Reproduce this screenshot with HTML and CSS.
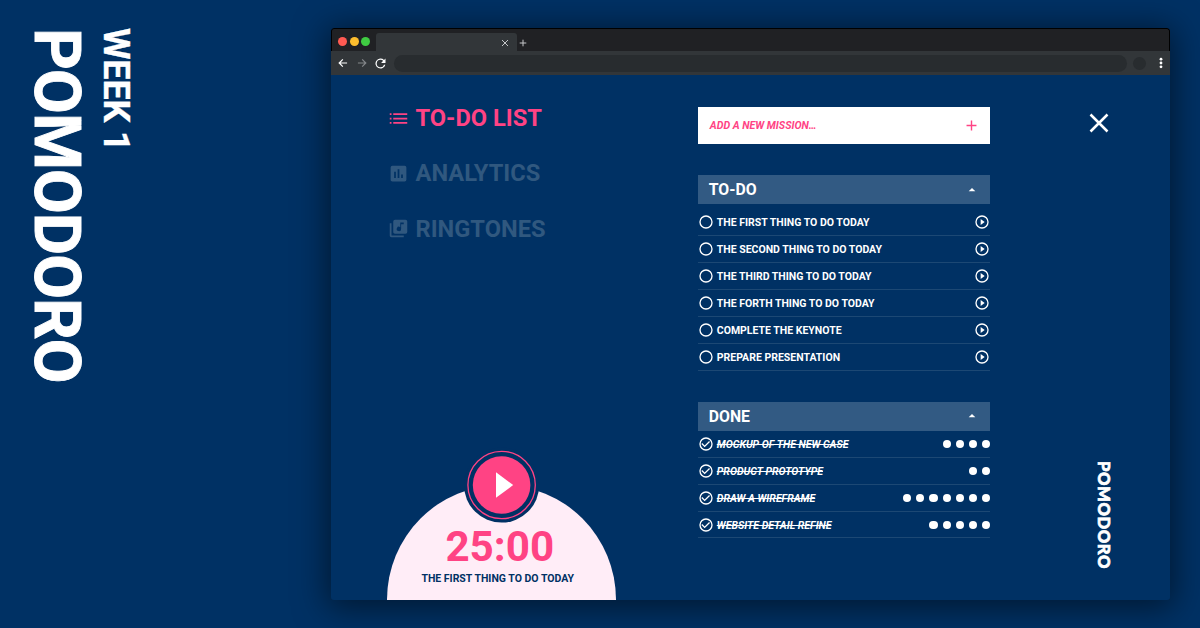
FILE: index.html
```html
<!DOCTYPE html>
<html lang="en">
<head>
<meta charset="utf-8">
<title>Pomodoro</title>
<link rel="stylesheet" href="styles.css">
</head>
<body>
<svg class="defs" width="0" height="0">
  <symbol id="ring" viewBox="0 0 24 24"><path d="M12 2a10 10 0 1 0 0 20 10 10 0 0 0 0-20zm0 18a8 8 0 1 1 0-16 8 8 0 0 1 0 16z"/></symbol>
  <symbol id="play" viewBox="0 0 24 24"><path d="M10 16.5l6-4.5-6-4.5v9zM12 2a10 10 0 1 0 0 20 10 10 0 0 0 0-20zm0 18a8 8 0 1 1 0-16 8 8 0 0 1 0 16z"/></symbol>
  <symbol id="check" viewBox="0 0 24 24"><path d="M16.59 7.58L10 14.17l-3.59-3.58L5 12l5 5 8-8zM12 2a10 10 0 1 0 0 20 10 10 0 0 0 0-20zm0 18a8 8 0 1 1 0-16 8 8 0 0 1 0 16z"/></symbol>
  <symbol id="up" viewBox="0 0 24 24"><path d="M7 14l5-5 5 5z"/></symbol>
</svg>
<div class="cover">
  <header class="heading">
    <h1 class="heading-title">POMODORO</h1>
    <p class="heading-week">WEEK 1</p>
  </header>
  <div class="window">
    <div class="tabs">
      <i class="light red"></i><i class="light yellow"></i><i class="light green"></i>
      <div class="tab"><svg width="8" height="8" viewBox="0 0 8 8"><path d="M1 1l6 6M7 1l-6 6"/></svg></div>
      <svg class="new-tab" width="8" height="8" viewBox="0 0 8 8"><path d="M4 .7v6.6M.7 4h6.6"/></svg>
    </div>
    <div class="toolbar">
      <svg class="nav" width="14" height="14" viewBox="0 0 24 24"><path d="M19 11H7.83l4.59-4.59L11 5l-7 7 7 7 1.41-1.41L7.83 13H19z"/></svg>
      <svg class="nav dim" width="14" height="14" viewBox="0 0 24 24"><path d="M13 5l-1.410 1.410L16.17 11H5v2h11.17l-4.580 4.590L13 19l7-7z"/></svg>
      <svg class="nav reload" width="15" height="15" viewBox="0 0 24 24"><path d="M17.65 6.35A8 8 0 1 0 19.73 14h-2.08A6 6 0 1 1 12 6c1.66 0 3.14.69 4.22 1.78L13 11h7V4z"/></svg>
      <div class="address"></div>
      <i class="avatar"></i>
      <svg class="nav menu" width="14" height="14" viewBox="0 0 24 24"><circle cx="12" cy="5.500" r="2.400"/><circle cx="12" cy="12" r="2.400"/><circle cx="12" cy="18.500" r="2.400"/></svg>
    </div>
    <main class="page">
      <section class="side">
        <nav class="sections">
          <a class="section active"><svg width="21" height="21" viewBox="0 0 24 24"><path d="M2 6h2v2H2zM2 11h2v2H2zM2 16h2v2H2zM6 6h16v2H6zM6 11h16v2H6zM6 16h16v2H6z"/></svg>TO-DO LIST</a>
          <a class="section"><svg width="21" height="21" viewBox="0 0 24 24"><path d="M19 3H5a2 2 0 0 0-2 2v14c0 1.100.9 2 2 2h14a2 2 0 0 0 2-2V5a2 2 0 0 0-2-2zM9 17H7v-7h2v7zm4 0h-2V7h2v10zm4 0h-2v-4h2v4z"/></svg>ANALYTICS</a>
          <a class="section"><svg width="21" height="21" viewBox="0 0 24 24"><path d="M20 2H8a2 2 0 0 0-2 2v12c0 1.100.9 2 2 2h12a2 2 0 0 0 2-2V4a2 2 0 0 0-2-2zm-2 5h-3v5.500a2.500 2.500 0 1 1-1-2V5h4v2zM4 6H2v14c0 1.100.9 2 2 2h14v-2H4V6z"/></svg>RINGTONES</a>
        </nav>
        <div class="timer">
          <svg class="start" width="76" height="76" viewBox="0 0 76 76"><circle class="gap" cx="37.600" cy="38" r="37.600"/><circle class="rim" cx="37.600" cy="38" r="33.700"/><circle class="disc" cx="37.600" cy="38" r="28.800"/><path class="arrow" d="M32 25.300v25.500l17.200-12.700z"/></svg>
          <div class="time">25:00</div>
          <div class="task">THE FIRST THING TO DO TODAY</div>
        </div>
      </section>
      <section class="lists">
        <div class="add"><span>ADD A NEW MISSION…</span><svg width="17" height="17" viewBox="0 0 24 24"><path d="M19 13h-6v6h-2v-6H5v-2h6V5h2v6h6z"/></svg></div>
        <h2 class="bar">TO-DO<svg width="16" height="16"><use href="#up"/></svg></h2>
        <ul class="items todo">
          <li><svg><use href="#ring"/></svg><span>THE FIRST THING TO DO TODAY</span><svg><use href="#play"/></svg></li>
          <li><svg><use href="#ring"/></svg><span>THE SECOND THING TO DO TODAY</span><svg><use href="#play"/></svg></li>
          <li><svg><use href="#ring"/></svg><span>THE THIRD THING TO DO TODAY</span><svg><use href="#play"/></svg></li>
          <li><svg><use href="#ring"/></svg><span>THE FORTH THING TO DO TODAY</span><svg><use href="#play"/></svg></li>
          <li><svg><use href="#ring"/></svg><span>COMPLETE THE KEYNOTE</span><svg><use href="#play"/></svg></li>
          <li><svg><use href="#ring"/></svg><span>PREPARE PRESENTATION</span><svg><use href="#play"/></svg></li>
        </ul>
        <h2 class="bar">DONE<svg width="16" height="16"><use href="#up"/></svg></h2>
        <ul class="items done">
          <li><svg><use href="#check"/></svg><span>MOCKUP OF THE NEW CASE</span><div class="dots"><i></i><i></i><i></i><i></i></div></li>
          <li><svg><use href="#check"/></svg><span>PRODUCT PROTOTYPE</span><div class="dots"><i></i><i></i></div></li>
          <li><svg><use href="#check"/></svg><span>DRAW A WIREFRAME</span><div class="dots"><i></i><i></i><i></i><i></i><i></i><i></i><i></i></div></li>
          <li><svg><use href="#check"/></svg><span>WEBSITE DETAIL REFINE</span><div class="dots"><i></i><i></i><i></i><i></i><i></i></div></li>
        </ul>
      </section>
      <aside class="edge">
        <svg class="close" width="20" height="20" viewBox="0 0 20 20"><path d="M1.500 1.500l17 17M18.500 1.500l-17 17"/></svg>
        <div class="brand">POMODORO</div>
      </aside>
    </main>
  </div>
</div>
</body>
</html>
```
FILE: styles.css
```css
* { box-sizing: border-box; }
body { margin: 0; background: #003164; color: #fff; font-family: Roboto, sans-serif; font-weight: 700; }
h1, h2, p, ul { margin: 0; padding: 0; }
ul { list-style: none; }
svg { display: block; flex: none; fill: currentColor; }
.defs { position: absolute; }
.cover { display: flex; width: 1200px; height: 628px; overflow: hidden; }

.heading { display: flex; flex: none; width: 331px; padding: 28px 0 0 17px; gap: 8px; }
.heading-title, .heading-week { writing-mode: vertical-rl; white-space: nowrap; }
.heading-title { width: 80px; font-size: 65px; line-height: 80px; letter-spacing: -.9px; -webkit-text-stroke: .9px #fff; }
.heading-week { width: 22px; font-size: 36px; line-height: 22px; letter-spacing: -.15px; -webkit-text-stroke: .3px #fff; }

.window { display: flex; flex-direction: column; flex: none; width: 839.400px; height: 572px; margin-top: 28px; border-radius: 3px; overflow: hidden; background: #003164; box-shadow: 0 4px 32px 4px rgba(0, 0, 0, .5); }
.tabs { display: flex; align-items: center; flex: none; height: 23px; padding: 2px 0 0 6px; background: #202124; border: 1px solid #000; border-bottom: 0; border-radius: 3px 3px 0 0; }
.light { flex: none; width: 9px; height: 9px; margin-right: 2.600px; border-radius: 50%; }
.red { background: #ff5a52; }
.yellow { background: #fdbd2e; }
.green { background: #3fcb42; }
.tab { display: flex; align-items: center; justify-content: flex-end; width: 141px; height: 18px; margin: 2px 2px 0 3.200px; padding: 2px 8px 0 0; border-radius: 3px 3px 0 0; background: #323639; }
.tab svg, .new-tab { fill: none; stroke: #c5c7c9; stroke-width: 1; }
.new-tab { margin-top: 3px; }
.toolbar { display: flex; align-items: center; flex: none; height: 24px; padding-left: 5px; background: #323639; }
.nav { margin-right: 5px; }
.nav.dim { color: #84878a; margin-right: 4px; }
.nav.reload { margin-right: 5px; }
.address { flex: none; width: 732.500px; height: 17px; margin-left: 1px; border-radius: 9px; background: #282c2f; }
.avatar { flex: none; width: 13px; height: 13px; margin: 0 7.500px 0 6.500px; border-radius: 50%; background: #282c2f; }
.nav.menu { margin: 0; }

.page { display: flex; flex: 1; padding-left: 56px; }
.side { display: flex; flex-direction: column; flex: none; justify-content: space-between; width: 311.300px; padding-top: 29px; }
.sections { display: flex; flex-direction: column; gap: 27.300px; padding-left: 1px; }
.section { display: flex; align-items: center; gap: 6.500px; height: 28px; font-size: 23.650px; line-height: 28px; color: #30587f; }
.active { color: #ff4384; }
.timer { position: relative; width: 229px; height: 115px; padding-top: 36px; text-align: center; color: #003164; background: #ffedf7; border-radius: 115px 115px 0 0; }
.start { position: absolute; left: 77px; top: -37.800px; }
.gap { fill: #003164; }
.rim { fill: none; stroke: #ff4384; stroke-width: 1.300; }
.disc { fill: #ff4384; }
.arrow { fill: #fff; }
.time { padding-right: 3.500px; font-size: 42.200px; line-height: 51px; color: #ff4384; }
.task { padding-right: 7.500px; font-size: 10.500px; line-height: 13px; }

.lists { flex: none; width: 292px; padding-top: 32px; }
.add { display: flex; align-items: center; justify-content: space-between; height: 36.500px; margin-bottom: 31.500px; padding: 0 10px 0 11.500px; color: #ff4384; background: #fff; font-size: 10.600px; font-style: italic; }
.bar { display: flex; align-items: center; justify-content: space-between; height: 29px; padding: 0 10.500px; background: #325a83; font-size: 15.800px; }
.items li { display: flex; align-items: center; height: 26.900px; border-bottom: 1px solid #1c4874; font-size: 10.500px; line-height: 13px; }
.items li > svg { width: 16px; height: 16px; }
.items li > span { flex: 1; margin-left: 2.500px; padding-top: 1px; white-space: nowrap; }
.todo { padding: 5.200px 0 0; margin-bottom: 31.400px; }
.done span { font-style: italic; text-decoration: line-through; text-decoration-thickness: 1px; }
.dots { display: flex; gap: 5.100px; padding-top: 1px; }
.dots i { width: 8.100px; height: 8.100px; border-radius: 50%; background: #fff; }

.edge { display: flex; flex-direction: column; width: 179px; padding: 37.500px 0 0 99px; }
.close { fill: none; stroke: #fff; stroke-width: 2.500; }
.brand { width: 20px; margin: 328.500px 0 0 4.500px; writing-mode: vertical-rl; font-family: Lato, sans-serif; font-size: 16.600px; font-weight: 900; line-height: 20px; letter-spacing: .6px; white-space: nowrap; -webkit-text-stroke: .7px #fff; }
```
